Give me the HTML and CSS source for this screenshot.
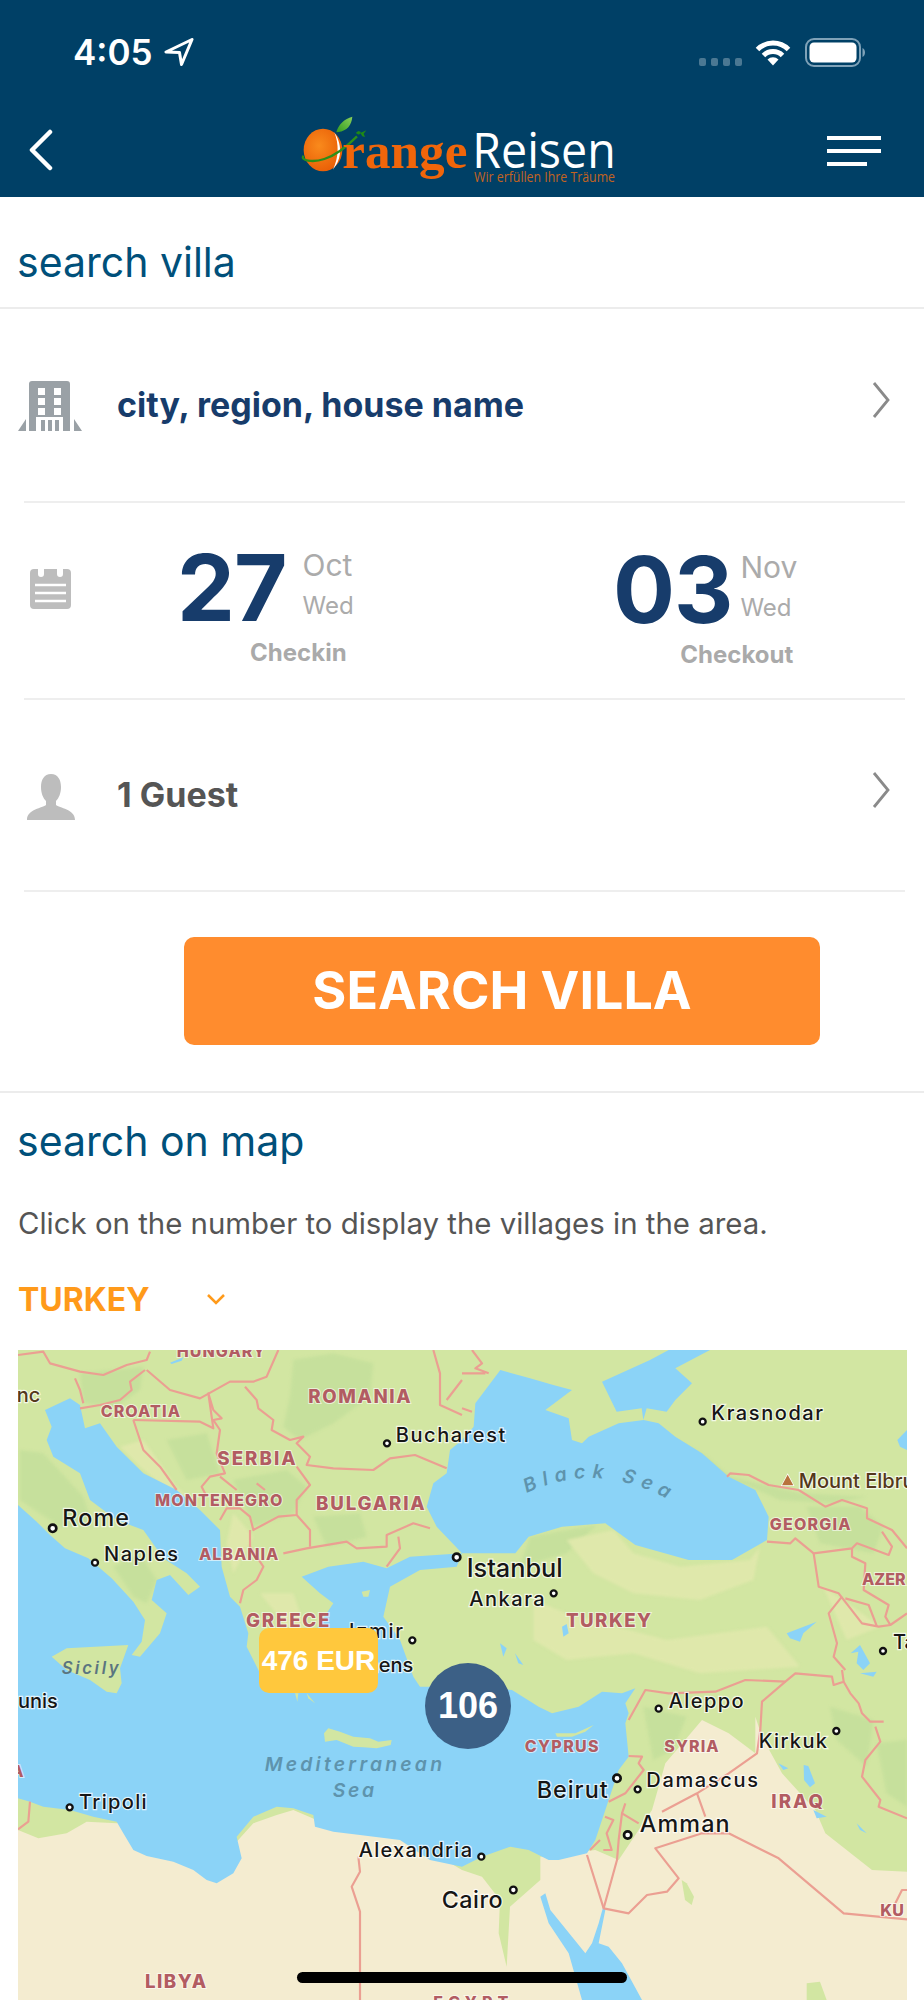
FILE: index.html
```html
<!DOCTYPE html>
<html lang="en">
<head>
<meta charset="utf-8">
<title>search villa</title>
<link rel="stylesheet" href="styles.css">
</head>
<body>
<div class="page">
  <header class="top">
    <div class="status">
      <div class="clock">
        <span class="time">4:05</span>
        <svg class="loc" width="30" height="28" viewBox="0 0 30 28"><path d="M28 1.500 2 14l13.500.6L17.500 26.500Z" fill="none" stroke="#fff" stroke-width="3" stroke-linejoin="round"/></svg>
      </div>
      <div class="sys">
        <div class="signal"><i></i><i></i><i></i><i></i></div>
        <svg class="wifi" width="36" height="28" viewBox="0 0 36 28"><g fill="none" stroke="#fff" stroke-width="5"><path d="M2.500 11.500a22 22 0 0 1 31 0"/><path d="M8.500 17.500a13.500 13.500 0 0 1 19 0"/></g><path d="M12.500 21.500a8 8 0 0 1 11 0L18 27.500Z" fill="#fff"/></svg>
        <svg class="batt" width="60" height="29" viewBox="0 0 60 29"><rect x="1" y="1" width="54" height="27" rx="8" fill="none" stroke="#7fa2b8" stroke-width="2"/><rect x="4.500" y="4.500" width="47" height="20" rx="4.500" fill="#fff"/><path d="M57.500 10v9c1.600-.6 2.500-2.400 2.500-4.500s-.9-3.900-2.500-4.500Z" fill="#7fa2b8"/></svg>
      </div>
    </div>
    <nav class="nav">
      <svg class="back" width="26" height="42" viewBox="0 0 26 42"><path d="M22 3 4 21l18 18" fill="none" stroke="#fff" stroke-width="4.500" stroke-linecap="round" stroke-linejoin="round"/></svg>
      <svg class="logo" width="360" height="90" viewBox="0 0 1080 270">
        <defs>
          <radialGradient id="orange" cx=".4" cy=".4" r=".7"><stop offset="0" stop-color="#f98a1c"/><stop offset="1" stop-color="#e85a04"/></radialGradient>
          <linearGradient id="leaf" x1="0" y1="1" x2="1" y2="0"><stop offset="0" stop-color="#2f9a1e"/><stop offset="1" stop-color="#8ad05a"/></linearGradient>
        </defs>
        <ellipse cx="132" cy="141" rx="58" ry="64" fill="url(#orange)"/>
        <path d="M166 88c22 34 26 76-4 112 18-38 18-76 4-112Z" fill="#fff"/>
        <path d="M172 88c6-24 24-40 48-47-2 26-16 42-42 46Z" fill="url(#leaf)"/>
        <path d="M74 158c-12 14 26 22 62 10 38-12 68-38 98-68" fill="none" stroke="#2d8f18" stroke-width="7"/>
        <path d="M218 102l44-20-8 10 4 10-8-2-6-10Zm12-12 8-6 8 3-6 8Z" fill="#1f8a14"/>
        <text class="logo-orange" x="190" y="195" textLength="375" lengthAdjust="spacingAndGlyphs">range</text>
        <text class="logo-white" x="580" y="195" textLength="430" lengthAdjust="spacingAndGlyphs">Reisen</text>
        <text class="logo-tag" x="585" y="238" textLength="423" lengthAdjust="spacingAndGlyphs">Wir erfüllen Ihre Träume</text>
      </svg>
      <div class="burger"><i></i><i></i><i class="short"></i></div>
    </nav>
  </header>

  <h2 class="section-title first">search villa</h2>

  <section class="form">
    <div class="row city-row">
      <svg class="ico-building" width="64" height="50" viewBox="0 0 64 50"><path d="M11 50V3q0-3 3-3h35q3 0 3 3v47h-7V36H18v14Z" fill="#9aa1a6"/><g fill="#fff"><rect x="20" y="7" width="7" height="7"/><rect x="36" y="7" width="7" height="7"/><rect x="20" y="17" width="7" height="7"/><rect x="36" y="17" width="7" height="7"/><rect x="20" y="27" width="7" height="7"/><rect x="36" y="27" width="7" height="7"/></g><path d="M23 39h4v11h-4Zm7 0h4v11h-4Zm7 0h4v11h-4ZM8 38v12H0Zm48 0 8 12h-8Z" fill="#9aa1a6"/></svg>
      <span class="row-text navy">city, region, house name</span>
      <svg class="chev" width="18" height="38" viewBox="0 0 18 38"><path d="M2 2 16 19 2 36" fill="none" stroke="#8a8a8a" stroke-width="2.800"/></svg>
    </div>
    <hr class="rule">
    <div class="dates">
      <svg class="ico-cal" width="41" height="43" viewBox="0 0 41 43"><path d="M4 3h4v5a3 3 0 0 0 6 0V3h13v5a3 3 0 0 0 6 0V3h4q4 0 4 4v32q0 4-4 4H4q-4 0-4-4V7q0-4 4-4Z" fill="#bdbdbd"/><path d="M5 19h31M5 27h31M5 35h31" stroke="#fff" stroke-width="2.500"/></svg>
      <div class="date">
        <div class="date-top">
          <span class="num">27</span>
          <div class="meta"><span class="mon">Oct</span><span class="day">Wed</span></div>
        </div>
        <div class="label in">Checkin</div>
      </div>
      <div class="date out">
        <div class="date-top">
          <span class="num">03</span>
          <div class="meta"><span class="mon">Nov</span><span class="day">Wed</span></div>
        </div>
        <div class="label">Checkout</div>
      </div>
    </div>
    <hr class="rule">
    <div class="row guest-row">
      <svg class="ico-user" width="48" height="46" viewBox="0 0 48 46"><path d="M24 0c7 0 10 6 10 13 0 6-2 11-5 14v4c3 3 19 4 19 15H0c0-11 16-12 19-15v-4c-3-3-5-8-5-14C14 6 17 0 24 0Z" fill="#bdbdbd"/></svg>
      <span class="row-text grey">1 Guest</span>
      <svg class="chev" width="18" height="38" viewBox="0 0 18 38"><path d="M2 2 16 19 2 36" fill="none" stroke="#8a8a8a" stroke-width="2.800"/></svg>
    </div>
    <hr class="rule">
    <button class="cta" type="button">SEARCH VILLA</button>
  </section>

  <h2 class="section-title second">search on map</h2>
  <p class="intro">Click on the number to display the villages in the area.</p>
  <div class="country"><span>TURKEY</span><svg width="20" height="12" viewBox="0 0 20 12"><path d="M2 2l8 8 8-8" fill="none" stroke="#ff9a1a" stroke-width="2.500"/></svg></div>

  <div class="map">
    <svg class="map-svg" width="889" height="650" viewBox="54 30 2667 1950">
      <rect class="land" x="54" y="30" width="2667" height="1950"/>
      <path class="desert" d="M54 1470 115 1495 200 1480 260 1445 350 1450 700 1400 710 1505 760 1450 830 1425 880 1410 950 1440 1000 1450 1200 1480 1386 1590 1446 1610 1500 1680 1496 1780 1520 1880 1530 1700 1621 1620 1621 1550 1786 1530 1856 1560 1956 1410 1996 1270 2106 1140 2186 1180 2266 1240 2266 1130 2286 1190 2346 1300 2446 1410 2476 1480 2616 1590 2721 1595 2721 1980 54 1980Z"/>
      <g class="g2">
        <path d="M880 60 1000 40 1120 70 1110 170 1000 250 900 300 850 260 870 170Z"/>
        <path d="M240 100 430 80 420 150 350 200 250 190Z"/>
        <path d="M500 300 620 280 660 400 560 420Z"/>
        <path d="M700 420 860 390 920 440 880 520 760 560Z"/>
        <path d="M940 530 1080 520 1100 590 980 620Z"/>
        <path d="M60 330 130 340 250 470 280 560 180 560 60 480Z"/>
        <path d="M340 680 420 640 470 720 440 790 400 770Z"/>
        <path d="M1590 590 1790 555 1700 640 1560 680Z"/>
        <path d="M2030 300 2120 350 2190 410 2400 460 2600 470 2500 490 2340 480 2250 440 2080 380Z"/>
        <path d="M2420 500 2580 500 2650 560 2620 640 2460 610Z"/>
        <path d="M2490 1100 2620 1140 2600 1280 2510 1200Z"/>
        <path d="M2630 1210 2721 1200 2721 1400 2660 1360Z"/>
        <path d="M1930 1100 2060 1130 2020 1230 1960 1260Z"/>
      </g>
      <g class="g3">
        <path d="M360 320 430 300 530 440 600 500 540 480 420 380Z"/>
        <path d="M700 520 760 590 700 700 680 610Z"/>
        <path d="M1700 600 1840 570 1900 640 2040 680 2250 660 2280 620 2260 720 2100 780 1900 760 1780 700Z"/>
        <path d="M1600 780 1700 820 2000 900 2300 860 2400 980 2100 1000 1900 940 1700 960 1600 900Z"/>
        <path d="M780 760 880 760 920 880 860 860Z"/>
        <path d="M2470 740 2600 830 2640 860 2540 900Z"/>
      </g>
      <path class="sea" d="M54 495 110 545 150 585 195 625 265 655 335 715 400 785 435 840 425 905 395 945 420 950 480 880 500 820 455 780 470 720 510 705 565 765 600 740 560 700 490 655 430 570 350 540 270 480 240 400 160 350 140 300 155 260 135 210 210 175 240 195 255 265 300 250 350 320 430 400 530 450 600 510 660 570 665 680 690 770 720 800 745 880 740 920 780 1000 830 1045 900 960 960 850 1000 790 960 760 905 710 985 680 1090 665 1160 685 1230 650 1386 640 1370 680 1260 690 1170 740 1150 830 1200 900 1240 1010 1260 1040 1320 1040 1420 1040 1536 1050 1616 1100 1656 1120 1736 1100 1806 1055 1866 1060 1906 1045 1876 1090 1886 1120 1876 1150 1886 1250 1856 1290 1826 1380 1786 1500 1761 1540 1676 1560 1646 1560 1586 1530 1531 1520 1446 1550 1386 1580 1290 1560 1200 1500 1080 1485 1000 1475 945 1460 940 1425 880 1405 830 1400 760 1430 710 1490 725 1555 700 1600 650 1630 620 1620 580 1590 520 1565 440 1548 400 1530 370 1480 350 1445 280 1430 210 1410 130 1400 90 1385 54 1375Z"/>
      <path class="sea" d="M1501 90 1426 190 1421 260 1386 300 1350 330 1340 400 1300 430 1280 500 1310 560 1386 640 1546 640 1586 590 1686 560 1816 550 1906 615 2066 660 2196 660 2301 600 2306 530 2266 450 2186 410 2106 340 2026 290 1976 250 1931 240 1856 250 1766 290 1746 310 1716 300 1706 235 1636 210 1716 150 1660 135 1590 115Z"/>
      <path class="sea" d="M1806 125 1950 60 2006 30 2130 30 2026 85 2076 130 2026 180 2000 215 1940 205 1930 240 1925 205 1850 215Z"/>
      <path class="sea" d="M1621 1670 1636 1660 1651 1710 1716 1790 1756 1840 1776 1810 1796 1750 1811 1695 1816 1710 1796 1810 1826 1820 1866 1870 1926 1980 1746 1980 1706 1840 1646 1750Z"/>
      <g class="sea">
        <path d="M510 68 550 52 545 62 515 72Z"/><path d="M1686 860 1700 852 1706 880 1690 890Z"/><path d="M2360 880 2450 845 2410 880 2400 905 2370 895Z"/>
        <path d="M2552 940 2580 915 2610 970 2590 990 2570 970 2575 935Z"/><path d="M2692 300 2721 270 2721 330 2700 320Z"/>
        <path d="M2411 1275 2425 1278 2445 1330 2430 1342 2412 1320Z"/><path d="M2335 1270 2365 1285 2350 1290Z"/><path d="M2570 1450 2590 1470 2600 1480 2580 1470Z"/><path d="M2440 1410 2480 1430 2450 1435Z"/>
        <path d="M1500 910 1520 925 1510 950Z"/><path d="M1545 940 1570 975 1555 970Z"/><path d="M2580 1000 2630 995 2620 1010Z"/>
      </g>
      <g class="land">
        <path d="M155 950 200 925 385 915 360 985 365 1030 350 1060 320 1055 270 1020 200 990Z"/>
        <path d="M1085 755 1110 750 1105 770 1090 770Z"/>
        <path d="M972 1180 985 1165 1020 1175 1060 1190 1110 1195 1135 1205 1175 1200 1172 1215 1130 1225 1090 1222 1060 1220 1010 1200 975 1205Z"/>
        <path d="M1666 1180 1726 1180 1781 1155 1756 1175 1716 1190 1671 1190Z"/>
        <path d="M885 1060 895 1060 892 1085Z"/><path d="M920 1060 945 1090 925 1075Z"/>
        <path d="M2045 1620 2060 1630 2082 1670 2075 1695 2055 1680Z" />
        <path d="M2420 1930 2460 1925 2480 1980 2420 1980Z"/>
      </g>
      <g class="border">
        <path d="M54 45 130 35 150 70 240 95 310 105 380 75 440 60 450 35"/>
        <path d="M440 90 510 150 600 175 690 125 760 125 800 110 835 30"/>
        <path d="M435 90 390 125 395 150 360 180 300 195 240 205M225 115 240 150 250 190"/>
        <path d="M400 240 600 245 640 265 625 160 640 210 665 235 640 240 660 270 650 340 675 400 630 410 605 440 620 470"/>
        <path d="M735 140 770 180 775 205 820 240 815 270 870 300 910 290 890 310 930 350 920 375 1000 385 1120 390 1170 355 1245 345 1340 385"/>
        <path d="M890 380 930 435 890 480 890 525 835 530 760 570 750 530 720 505 680 505 660 540"/>
        <path d="M400 240 430 330 480 380 530 450"/>
        <path d="M660 410 710 450M770 430 795 450"/>
        <path d="M750 570 750 620 790 680 770 720 730 750 720 790"/>
        <path d="M850 640 920 625 1040 605 1070 625 1160 620 1160 585 1240 550 1290 565"/>
        <path d="M890 525 930 570 930 620M1195 590 1200 625 1160 680"/>
        <path d="M1300 30 1320 100 1320 195 1386 225M1386 120 1340 180"/>
        <path d="M1416 30 1446 70 1426 85 1466 100M1386 100 1456 100M1386 205 1416 215"/>
        <path d="M2181 410 2191 400 2246 405 2306 435 2396 450 2476 500 2526 480 2601 505 2601 535 2676 570 2721 625"/>
        <path d="M2301 605 2371 610 2386 595 2441 640 2556 625 2571 610 2666 645 2676 620 2646 575"/>
        <path d="M2441 640 2456 740 2516 760 2586 850 2636 860 2671 855 2721 820"/>
        <path d="M2526 770 2486 820 2511 910 2501 950 2536 990M2536 775 2606 795 2631 860M2556 625 2556 650 2596 670 2591 750 2666 795 2656 830 2671 855"/>
        <path d="M1886 1140 1936 1050 2006 1060 2146 1055 2236 1020 2356 1025 2386 1000 2496 1010 2501 1035 2531 1025 2526 990"/>
        <path d="M2531 1025 2551 1060 2576 1090 2586 1120 2611 1145 2651 1145M2626 1160 2641 1205 2596 1260 2586 1310 2641 1380 2636 1400 2721 1435"/>
        <path d="M2356 1025 2286 1085 2281 1170 2271 1240 2186 1300 2091 1360 1986 1415"/>
        <path d="M2091 1360 2116 1430M2186 1480 2336 1555 2531 1720 2721 1738M2186 1480 2106 1480 1966 1525 2036 1615 2001 1655 1941 1665 1886 1720 1811 1705 1761 1545"/>
        <path d="M1811 1705 1851 1560 1856 1500 1866 1420 1916 1450"/>
        <path d="M1886 1248 1926 1250 1916 1270 1931 1290 1876 1360 1826 1385M1866 1420 1876 1390"/>
        <path d="M1815 1430 1840 1440 1820 1480 1835 1530 1810 1530M1770 1530 1800 1500"/>
        <path d="M2686 1690 2706 1650 2721 1650"/>
        <path d="M1075 1550 1080 1595 1055 1640 1080 1715 1080 1980"/>
        <path d="M90 1385 85 1445 54 1468"/>
      </g>
      <g class="ctry">
        <text x="530" y="50" textLength="265">HUNGARY</text>
        <text class="lg" x="925" y="190" textLength="307">ROMANIA</text>
        <text x="302" y="232" textLength="238">CROATIA</text>
        <text class="lg" x="652" y="374" textLength="235">SERBIA</text>
        <text x="465" y="497" textLength="382">MONTENEGRO</text>
        <text class="lg" x="948" y="510" textLength="326">BULGARIA</text>
        <text x="597" y="660" textLength="238">ALBANIA</text>
        <text class="lg" x="738" y="860" textLength="250">GREECE</text>
        <text class="lg" x="1698" y="862" textLength="255">TURKEY</text>
        <text x="2309" y="570" textLength="243">GEORGIA</text>
        <text x="2586" y="735">AZER</text>
        <text class="lg" x="435" y="1945" textLength="183">LIBYA</text>
        <text x="1300" y="2005" textLength="225">EGYPT</text>
        <text x="34" y="1310">A</text>
        <text x="1574" y="1235" textLength="222">CYPRUS</text>
        <text x="1993" y="1235" textLength="163">SYRIA</text>
        <text class="lg" x="2314" y="1405" textLength="155">IRAQ</text>
        <text x="2641" y="1727">KU</text>
      </g>
      <g class="city">
        <text class="brown" x="50" y="185">nc</text>
        <text x="1187" y="305" textLength="329">Bucharest</text>
        <text class="xl" x="187" y="558" textLength="200">Rome</text>
        <text x="312" y="663" textLength="222">Naples</text>
        <text x="2134" y="240" textLength="335">Krasnodar</text>
        <text class="brown" x="2396" y="443">Mount Elbrus</text>
        <text class="xxl" x="1400" y="712" textLength="288">Istanbul</text>
        <text x="1408" y="798" textLength="226">Ankara</text>
        <text x="2679" y="928">Ta</text>
        <text x="1047" y="895" textLength="162">Izmir</text>
        <text x="1240" y="995" text-anchor="end">Athens</text>
        <text x="54" y="1105">unis</text>
        <text x="237" y="1406" textLength="203">Tripoli</text>
        <text x="1076" y="1552" textLength="340">Alexandria</text>
        <text class="xl" x="1325" y="1703" textLength="183">Cairo</text>
        <text x="2006" y="1103" textLength="225">Aleppo</text>
        <text x="2276" y="1225" textLength="205">Kirkuk</text>
        <text class="xl" x="1610" y="1374" textLength="213">Beirut</text>
        <text x="1939" y="1342" textLength="335">Damascus</text>
        <text class="xl" x="1919" y="1477" textLength="270">Amman</text>
      </g>
      <g class="water">
        <path id="blacksea" d="M1580 460Q1800 352 2040 498" fill="none"/>
        <text><textPath href="#blacksea">Black Sea</textPath></text>
        <text x="794" y="1292" textLength="536">Mediterranean</text>
        <text x="998" y="1372" textLength="128">Sea</text>
        <text class="isle" x="185" y="1002" textLength="175">Sicily</text>
      </g>
      <g class="dot">
        <circle class="big" cx="158" cy="565" r="11"/><circle cx="285" cy="668" r="9"/><circle cx="1161" cy="310" r="9"/>
        <circle class="big" cx="1370" cy="652" r="11"/><circle cx="1237" cy="901" r="9"/><circle cx="2108" cy="245" r="9"/>
        <circle cx="1661" cy="760" r="9"/><circle cx="2649" cy="933" r="9"/><circle cx="209" cy="1402" r="9"/>
        <circle cx="1444" cy="1550" r="9"/><circle cx="1540" cy="1650" r="10"/><circle cx="1976" cy="1106" r="9"/>
        <circle cx="2509" cy="1173" r="9"/><circle class="big" cx="1851" cy="1315" r="11"/><circle cx="1913" cy="1348" r="9"/>
        <circle class="big" cx="1883" cy="1485" r="11"/>
      </g>
      <path class="peak" d="M2363 404 2380 436 2346 436Z"/>
    </svg>
    <div class="price">476 EUR</div>
    <div class="cluster">106</div>
  </div>
  <div class="home-bar"></div>
</div>
</body>
</html>
```
FILE: styles.css
```css
* { box-sizing: border-box; }
html, body { margin: 0; padding: 0; background: #fff; }
body { font-family: Inter, "Liberation Sans", sans-serif; }
.page { position: relative; width: 924px; height: 2000px; overflow: hidden; background: #fff; }

.top { height: 197px; background: #004066; }
.status { height: 104px; display: flex; justify-content: space-between; align-items: center; padding: 0 59px 0 73px; }
.clock { display: flex; align-items: center; gap: 11px; }
.time { color: #fff; font-size: 35px; font-weight: 600; line-height: 40px; }
.sys { display: flex; align-items: center; }
.signal { display: flex; gap: 5px; margin-top: 20px; margin-right: 13px; }
.signal i { display: block; width: 7px; height: 8px; border-radius: 2px; background: #4b7893; }
.wifi { margin-right: 14px; }
.nav { height: 93px; display: flex; align-items: center; justify-content: space-between; padding: 0 43px 0 28px; }
.nav .back { margin-top: -1px; }
.logo { margin-top: -6px; margin-left: 37px; }
.logo-orange { font-family: "Liberation Serif", serif; font-size: 152px; font-weight: 700; fill: #f0650a; }
.logo-white { font-family: "Open Sans", sans-serif; font-size: 146px; fill: #fff; }
.logo-tag { font-family: "Open Sans", sans-serif; font-size: 42px; fill: #c4631f; }
.burger { display: flex; flex-direction: column; gap: 9px; width: 54px; margin-top: 1px; }
.burger i { display: block; height: 4px; background: #fff; }
.burger .short { width: 40px; }

.section-title { margin: 0; font-size: 41px; font-weight: 400; line-height: 48px; color: #00507a; }
.section-title.first { height: 112px; padding: 41px 0 0 17px; border-bottom: 2px solid #ececec; }
.section-title.second { margin-top: 24px; padding-left: 17px; }

.form { padding: 0 19px 0 18px; border-bottom: 2px solid #ececec; }
.rule { height: 2px; margin: 0 0 0 6px; border: 0; background: #eeeeee; }
.row { display: flex; align-items: center; }
.city-row { height: 192px; }
.guest-row { height: 190px; }
.row-text { font-size: 34px; font-weight: 700; line-height: 40px; margin-left: 35px; }
.navy { color: #173c6b; }
.grey { color: #555555; }
.chev { margin-left: auto; margin-right: 15px; margin-bottom: 10px; }
.ico-user { margin: 4px -9px 0 9px; }
.ico-user + .row-text { margin-left: 51px; }
.ico-building { margin-top: 2px; }

.dates { height: 195px; display: grid; grid-template-columns: 159px 436px 1fr; align-items: start; padding-top: 51px; }
.ico-cal { margin: 12px 0 0 12px; }
.date-top { display: flex; }
.num { font-size: 92px; font-weight: 700; line-height: 68px; color: #173c6b; letter-spacing: -1px; }
.meta { display: flex; flex-direction: column; margin-left: 16px; }
.mon { font-size: 30px; line-height: 22px; color: #ababab; }
.day { font-size: 24px; line-height: 22px; color: #ababab; margin-top: 19px; }
.label { margin-top: 20px; padding-right: 4px; font-size: 24px; font-weight: 700; line-height: 22px; color: #aaaaaa; text-align: right; }
.label.in { padding-right: 7px; }
.date { width: fit-content; }
.date.out { margin-top: 2px; }
.date.out .meta { margin-left: 8px; }

.cta { display: block; width: 636px; height: 108px; margin: 45px 0 46px 166px; border: 0; border-radius: 10px; background: #ff8c2e; color: #fff; font-family: Inter, "Liberation Sans", sans-serif; font-size: 52px; font-weight: 700; padding: 0 0 2px; }

.intro { margin: 39px 0 0; padding-left: 18px; font-size: 29.400px; line-height: 40px; color: #555555; }
.country { display: flex; align-items: center; gap: 56px; margin-top: 35px; padding-left: 18px; height: 40px; font-size: 32px; font-weight: 700; color: #ff9a1a; }
.map { position: relative; width: 889px; height: 650px; margin: 31px 0 0 18px; overflow: hidden; }
.map-svg { display: block; }
.land { fill: #d2e6a2; }
.desert { fill: #f4ecd0; }
.sea { fill: #8bd3f7; }
.g2 { fill: #c6e09c; filter: blur(4px); }
.g3 { fill: #dfe8ab; filter: blur(4px); }
.border { fill: none; stroke: #eb9f92; stroke-width: 6.500; stroke-linejoin: round; }
.ctry text { font-family: Inter, sans-serif; font-size: 48px; font-weight: 800; fill: #b25c62; stroke: rgba(255,255,255,.6); stroke-width: 6; paint-order: stroke; }
.ctry .lg { font-size: 56px; }
.city text { font-family: Inter, sans-serif; font-size: 60px; font-weight: 500; fill: #161616; stroke: rgba(255,255,255,.75); stroke-width: 7; paint-order: stroke; }
.city .xl { font-size: 70px; }
.city .xxl { font-size: 76px; }
.city .brown { fill: #53381c; }
.water text { font-family: Inter, sans-serif; font-size: 58px; font-weight: 600; font-style: italic; fill: #5e93ad; letter-spacing: 4px; }
.water textPath { letter-spacing: 20px; }
.water .isle { fill: #5a7580; font-size: 50px; }
.dot circle { fill: #fff; stroke: #111; stroke-width: 7; }
.dot .big { stroke-width: 8; }
.peak { fill: #b8733c; stroke: #fff; stroke-width: 4; paint-order: stroke; }
.price { position: absolute; left: 241px; top: 278px; width: 119px; height: 65px; display: flex; align-items: center; justify-content: center; border-radius: 10px; background: #ffc83d; color: #fff; font-family: "Liberation Sans", sans-serif; font-size: 28px; font-weight: 700; white-space: nowrap; }
.cluster { position: absolute; left: 407px; top: 313px; width: 86px; height: 86px; display: flex; align-items: center; justify-content: center; border-radius: 50%; background: #3c6086; color: #fff; font-family: "Liberation Sans", sans-serif; font-size: 36px; font-weight: 700; }
.home-bar { position: absolute; left: 297px; top: 1972px; width: 330px; height: 11px; border-radius: 6px; background: #000; }
```
